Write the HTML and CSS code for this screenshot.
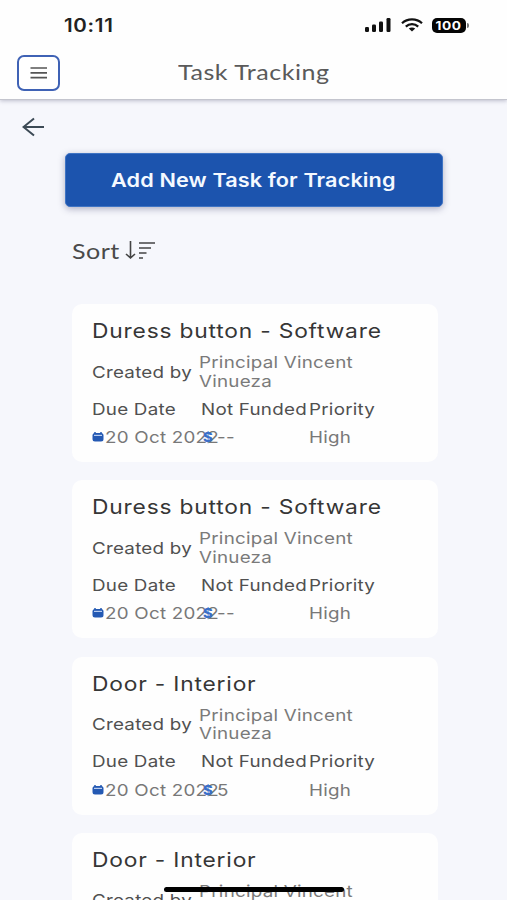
FILE: index.html
```html
<!DOCTYPE html>
<html lang="en">
<head>
    <meta charset="UTF-8">
    <meta name="viewport" content="width=device-width, initial-scale=1.0">
    <title>Task Tracking</title>
    <link rel="stylesheet" href="styles.css">
</head>
<body>
    <header>
        <div class="status-bar">
            <span class="time"><span class="wide">10:11</span></span>
            <svg class="signal" width="26" height="14" viewBox="0 0 26 14">
                <rect x="0" y="9" width="4" height="5" rx="1.2"/>
                <rect x="7" y="6.5" width="4" height="7.5" rx="1.2"/>
                <rect x="14" y="3.5" width="4" height="10.5" rx="1.2"/>
                <rect x="21.5" y="0" width="4" height="14" rx="1.2"/>
            </svg>
            <svg class="wifi" width="22" height="14" viewBox="0 0 22 14" fill="none" stroke="#111" stroke-width="2.2">
                <path d="M1 5.2C6.5 0 15.5 0 21 5.2"/>
                <path d="M4.8 8.6C8.3 5.2 13.7 5.2 17.2 8.6"/>
                <path d="M7.8 10.6C9.7 9.2 12.3 9.2 14.2 10.6L11 13.6Z" fill="#111" stroke="none"/>
            </svg>
            <span class="battery"><span>100</span></span>
            <span class="battery-tip"></span>
        </div>
        <div class="nav-bar">
            <button class="menu">
                <svg width="18" height="14" viewBox="0 0 18 14" stroke="#555" stroke-width="1.7">
                    <path d="M0.5 2H17M0.5 6.8H17M0.5 11.6H17"/>
                </svg>
            </button>
            <h1><span class="wide">Task Tracking</span></h1>
        </div>
    </header>

    <main>
        <svg class="back" width="22" height="20" viewBox="0 0 22 20" fill="none" stroke="#3c4a55" stroke-width="2">
            <path d="M22 10H2M12 1.5L1.5 10L12 18.5"/>
        </svg>
        <button class="add-task"><span class="wide">Add New Task for Tracking</span></button>
        <div class="sort">
            <span class="wide">Sort</span>
            <svg width="30" height="20" viewBox="0 0 30 20" fill="none" stroke="#444" stroke-width="1.6">
                <path d="M5.5 1V18M1 14L5.500 18L10 14"/>
                <path d="M14 3H30M14 8H26M14 13H21.5M14 18H18"/>
            </svg>
        </div>

        <!-- Task cards are filled in from the list below -->
        <div class="task-list"></div>
    </main>

    <div class="home-indicator"></div>

    <script>
        const tasks = [
            { title: 'Duress button - Software', budget: '--' },
            { title: 'Duress button - Software', budget: '--' },
            { title: 'Door - Interior', budget: '5', filled: true },
            { title: 'Door - Interior', budget: '5', filled: true }
        ];

        tasks.forEach(task => {
            const card = document.createElement('section');
            card.className = 'card';
            card.innerHTML = `
                <h2><span class="wide">${task.title}</span></h2>
                <div class="created">
                    <span class="wide">Created by</span>
                    <span class="wide author">Principal Vincent<br>Vinueza</span>
                </div>
                <div class="row labels">
                    <span class="wide">Due Date</span>
                    <span class="wide">Not Funded</span>
                    <span class="wide">Priority</span>
                </div>
                <div class="row values">
                    <div class="cell">
                        <svg class="calendar" width="12" height="10" viewBox="0 0 12 10">
                            <rect x="0.5" y="1" width="11" height="8.5" rx="2.5" fill="#2459b3"/>
                            <path d="M3 0V2M9 0V2" stroke="#2459b3" stroke-width="1.5"/>
                            <path d="M2 3.4H10" stroke="#b9cdf0" stroke-width="1.2"/>
                        </svg>
                        <span class="wide">20 Oct 2022</span>
                    </div>
                    <div class="cell">
                        <span class="dollar"><span class="wide">$</span></span>
                        <span class="wide ${task.filled ? 'amount' : ''}">${task.budget}</span>
                    </div>
                    <span class="wide">High</span>
                </div>
            `;
            document.querySelector('.task-list').appendChild(card);
        });
    </script>
</body>
</html>
```

FILE: styles.css
```css
* {
    box-sizing: border-box;
}

body {
    font-family: Inter, "Liberation Sans", sans-serif;
    background-color: #f6f7fc;
    margin: 0;
    height: 900px;
    overflow: hidden;
}

h1, h2 {
    margin: 0;
    font-weight: 400;
}

/* letters are drawn a little wider than tall */
.wide {
    display: inline-block;
    white-space: nowrap;
    transform: scaleX(1.14);
    transform-origin: left center;
}

header {
    height: 100px;
    background-color: #fefefe;
    border-bottom: 1px solid #c4c5ce;
    box-shadow: 0 1px 4px rgba(60, 60, 100, 0.3);
}

.status-bar {
    display: flex;
    align-items: center;
    height: 50px;
    padding-left: 64px;
}

.time {
    width: 301px;
    font-size: 18px;
    font-weight: 600;
    letter-spacing: 0.6px;
    color: #222;
}

.signal {
    fill: #111;
}

.wifi {
    margin-left: 10px;
}

.battery {
    width: 34px;
    height: 15px;
    margin-left: 9px;
    border-radius: 5px;
    background-color: #050505;
    color: #fff;
    font-size: 12px;
    font-weight: 700;
    letter-spacing: 0.6px;
    line-height: 15px;
    text-align: center;
}

.battery span {
    display: inline-block;
    transform: scaleX(1.14);
}

.battery-tip {
    width: 2px;
    height: 5px;
    margin-left: 1px;
    border-radius: 0 2px 2px 0;
    background-color: #777;
}

.nav-bar {
    display: flex;
    align-items: center;
    height: 45px;
    padding-left: 17px;
}

.menu {
    display: flex;
    align-items: center;
    justify-content: center;
    width: 43px;
    height: 36px;
    padding: 0;
    border: 2px solid #3f62b5;
    border-radius: 7px;
    background-color: #fff;
}

h1 {
    margin: 0 0 2px 118px;
    font-family: Lato, sans-serif;
    font-size: 22px;
    letter-spacing: 0.45px;
    color: #5a5a5a;
}

main {
    display: flex;
    flex-direction: column;
    padding: 17px 65px 0;
}

.back {
    margin-left: -43px;
}

.add-task {
    width: 378px;
    height: 54px;
    margin-top: 16px;
    padding: 1px 0 0 45px;
    border: 1px solid #3f74c4;
    border-radius: 5px;
    background-color: #1c54ae;
    box-shadow: 0 2px 7px rgba(40, 40, 90, 0.35);
    color: #f4f9ff;
    font-family: Inter, sans-serif;
    font-size: 19px;
    font-weight: 600;
    letter-spacing: 0.1px;
    text-align: left;
}

.sort {
    display: flex;
    align-items: center;
    height: 30px;
    margin: 28px 0 0 7px;
    font-family: Lato, sans-serif;
    font-size: 22px;
    letter-spacing: 0.4px;
    color: #4a4a4a;
}

.sort svg {
    margin-left: 11px;
}

.task-list {
    display: flex;
    flex-direction: column;
    gap: 18.3px;
    width: 366px;
    margin: 39px 0 0 7px;
}

.card {
    height: 158px;
    padding: 14px 0 0 19.5px;
    border-radius: 10px;
    background-color: #fefefe;
    font-size: 16.5px;
    letter-spacing: 0.2px;
    color: #505050;
}

h2 {
    font-size: 20px;
    line-height: 26px;
    letter-spacing: 0.7px;
    color: #363636;
}

.created {
    display: grid;
    grid-template-columns: 107px 1fr;
    align-items: center;
    height: 38px;
    margin-top: 8.5px;
}

.author {
    line-height: 18.5px;
    color: #7a7a7a;
}

.row {
    display: grid;
    grid-template-columns: 109px 108px 1fr;
    align-items: center;
}

.labels {
    height: 28px;
    margin-top: 4px;
}

.values {
    height: 29px;
    color: #787878;
}

.cell {
    display: flex;
    align-items: center;
}

.calendar {
    flex-shrink: 0;
    margin-right: 1.5px;
}

.dollar {
    width: 16px;
    padding-left: 2px;
    font-size: 13px;
    font-weight: 800;
    color: #3a6fc8;
}

.home-indicator {
    position: absolute;
    left: 164px;
    top: 887px;
    width: 180px;
    height: 5px;
    border-radius: 3px;
    background-color: #000;
}
```
